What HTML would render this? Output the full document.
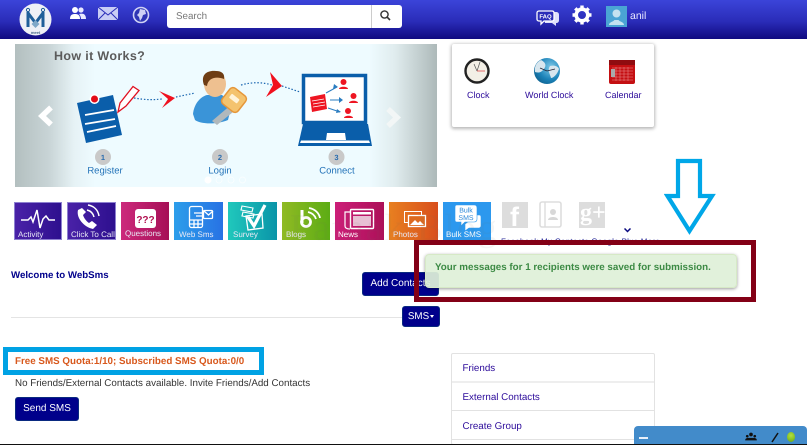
<!DOCTYPE html>
<html><head><meta charset="utf-8"><title>WebSms</title>
<style>
html,body{margin:0;padding:0;background:#fff;width:807px;height:445px;overflow:hidden;font-family:"Liberation Sans",sans-serif;text-rendering:geometricPrecision}
.a{position:absolute}
#root{position:relative;width:807px;height:445px;overflow:hidden}
.t{position:absolute;white-space:nowrap}
.tile{position:absolute;top:202px;height:38px;overflow:hidden}
.tile span{position:absolute;left:4px;bottom:1px;font-size:8px;color:#e8e8f5;white-space:nowrap}
.tile svg{position:absolute;left:0;top:0}
.btn{position:absolute;background:#00008b;border:1px solid #0a2a80;border-radius:3px;color:#fff;font-size:10px;text-align:center;box-sizing:border-box}
.li{position:absolute;left:462.500px;font-size:9.800px;color:#2b0a9a}
</style></head><body><div id="root">

<!-- header -->
<div class="a" style="left:0;top:0;width:807px;height:39px;background:linear-gradient(#3b44d9,#2a2cb8 55%,#100a80)"></div>
<svg class="a" style="left:18px;top:2px" width="36" height="36" viewBox="0 0 36 36">
<circle cx="17.5" cy="17.5" r="16" fill="#eef0f6"/>
<path d="M10 10V25M25 10V25M10 11L17.5 21L25 11" fill="none" stroke="#1f5f9a" stroke-width="3"/>
<circle cx="10" cy="8" r="1.6" fill="none" stroke="#1f5f9a"/><circle cx="25" cy="8" r="1.6" fill="none" stroke="#1f5f9a"/>
<path d="M17.5 18l4 4-4 4-4-4z" fill="#7fa8c8"/>
<text x="17.500" y="32" font-family="Liberation Sans" font-size="4" font-weight="bold" fill="#4a6a8a" text-anchor="middle">meet</text>
</svg>
<svg class="a" style="left:70px;top:6px" width="16" height="14" viewBox="0 0 16 14"><circle cx="5" cy="4" r="3" fill="#fff"/><path d="M0 13c0-4 2-5 5-5s5 1 5 5z" fill="#fff"/><circle cx="11" cy="4" r="2.6" fill="#e8e8ff"/><path d="M9 8c4-1 7 0 7 5h-5c0-2-1-4-2-5z" fill="#e8e8ff"/></svg>
<svg class="a" style="left:98px;top:7px" width="21" height="14" viewBox="0 0 21 14"><rect width="20" height="13" fill="#c9cdf5"/><path d="M0 0L10 8L20 0M0 13L7 6M20 13L13 6" fill="none" stroke="#2a2cb8" stroke-width="1"/></svg>
<svg class="a" style="left:132px;top:6px" width="18" height="18" viewBox="0 0 18 18"><circle cx="9" cy="9" r="7.5" fill="#2f35b5" stroke="#cfd2f5" stroke-width="1.6"/><path d="M8 3l5 1 1 4-3 1-1 3-2 3-1-4-2-2 2-2z" fill="#cfd2f5"/></svg>
<div class="a" style="left:167px;top:5px;width:235px;height:23px;background:#fff;border-radius:3px"></div>
<div class="a" style="left:371px;top:5px;width:1px;height:23px;background:#ccc"></div>
<div class="t" style="left:176px;top:11px;font-size:9.800px;color:#777">Search</div>
<svg class="a" style="left:379px;top:9px" width="13" height="13" viewBox="0 0 13 13"><circle cx="5.5" cy="5.5" r="3.6" fill="none" stroke="#333" stroke-width="1.4"/><path d="M8.2 8.2L11 11" stroke="#333" stroke-width="1.6"/></svg>
<svg class="a" style="left:536px;top:10px" width="24" height="18" viewBox="0 0 24 18"><path d="M7 2h13c2 0 3 1 3 3v5c0 2-1 3-3 3v3l-4-3H9z" fill="#dfe1fb"/><path d="M3 1h13c1.500 0 2 1 2 2v6c0 1-.5 2-2 2H8l-3 3v-3H3c-1.500 0-2-1-2-2V3c0-1 .5-2 2-2z" fill="#2a2cb8" stroke="#fff" stroke-width="1.300"/><text x="9.500" y="8.500" font-size="6" font-weight="bold" fill="#fff" text-anchor="middle" font-family="Liberation Sans">FAQ</text></svg>
<svg class="a" style="left:572px;top:5px" width="20" height="20" viewBox="0 0 20 20"><circle cx="10" cy="10" r="5.800" fill="none" stroke="#fff" stroke-width="3.600"/><g stroke="#fff" stroke-width="3.400"><path d="M10 0.500v3M10 16.500v3M0.500 10h3M16.500 10h3M3.300 3.300l2.100 2.100M14.600 14.600l2.100 2.100M3.300 16.700l2.100-2.100M14.600 5.400l2.100-2.100"/></g></svg>
<svg class="a" style="left:606px;top:6px" width="21" height="21" viewBox="0 0 21 21"><rect width="21" height="21" fill="#4aa4d4"/><circle cx="10.500" cy="7.500" r="4" fill="#c4e2f0"/><path d="M3 19c0-3 4-3 5.500-5h4c1.500 2 5.500 2 5.500 5z" fill="#c4e2f0"/></svg>
<div class="t" style="left:630px;top:10px;font-size:10.500px;color:#e8e8ff">anil</div>

<!-- slider -->
<div class="a" style="left:15px;top:44px;width:422px;height:143px;background:linear-gradient(90deg,#b3bfbf 0,#c8d4d6 8%,#e6f2f5 14%,#eefbff 19%,#eefbff 84%,#e0ecee 90%,#adb9b9 100%)"></div>
<div class="t" style="left:54px;top:49px;font-size:12.500px;font-weight:bold;color:#5b5b5b;letter-spacing:.35px">How it Works?</div>
<svg class="a" style="left:15px;top:44px" width="422" height="143" viewBox="15 44 422 143">
<path d="M51 107.500L42 116L51 124.500" fill="none" stroke="#fff" stroke-width="5.500"/>
<path d="M388 109L397 117.500L388 126" fill="none" stroke="#f2f6f6" stroke-width="5.500"/>
<!-- notepad -->
<path d="M77 103L113 95L122 135L86 143z" fill="#0a5eaa"/>
<circle cx="94.500" cy="99" r="5" fill="#fff"/><circle cx="94.500" cy="99" r="3.500" fill="#e30b17"/>
<path d="M85 115L114 110M85 124L115 119M87 132L116 126" stroke="#fff" stroke-width="1.800"/>
<path d="M118 112L120 103L133 86.500L139 90.500L126 106z" fill="#fff" stroke="#e01020" stroke-width="1.300"/>
<!-- dots & arrows -->
<path d="M134 98C146 100 152 100 162 99" fill="none" stroke="#1a66b0" stroke-width="1.200" stroke-dasharray="1.500 1.800"/>
<path d="M159 91L175 98L162 108L168 99z" fill="#f0101e"/>
<path d="M176 97L195 93" fill="none" stroke="#1a66b0" stroke-width="1.200" stroke-dasharray="1.500 1.800"/>
<path d="M241 85C252 82 262 82 272 85" fill="none" stroke="#1a66b0" stroke-width="1.200" stroke-dasharray="1.500 1.800"/>
<path d="M270 72L282 86L266 97L273 85z" fill="#f0101e"/>
<path d="M282 86L300 92" fill="none" stroke="#1a66b0" stroke-width="1.200" stroke-dasharray="1.500 1.800"/>
<!-- person -->
<path d="M193 114C194 104 200 97 207 95L222 95C228 99 230 105 230 112L228 120C216 125 200 124 195 120z" fill="#3a94d8"/>
<ellipse cx="215" cy="84" rx="11" ry="13" fill="#eec090"/>
<path d="M204 85C200 74 208 70 216 71C222 71 225 74 224 79C216 76 208 78 207 86z" fill="#6e3d14"/>
<path d="M212 121L232 104L238 108L217 125z" fill="#b0b8bc"/>
<rect x="224" y="90" width="20" height="20" rx="4" transform="rotate(38 234 100)" fill="#f4c36e" stroke="#e5963a" stroke-width="1.500"/>
<rect x="229" y="96" width="10" height="5" rx="1" transform="rotate(38 234 99)" fill="#fff3d8"/>
<!-- laptop -->
<rect x="303.500" y="75.500" width="62" height="47" fill="#fff" stroke="#0a5eaa" stroke-width="3.500"/>
<path d="M303 124H368L372 146H298z" fill="#0a5eaa"/>
<path d="M327 133H345L346 140H326z" fill="#fff"/>
<path d="M301 140.500H369L370 143H300z" fill="#fff"/>
<path d="M310 97L325 94L327 109L312 112z" fill="#ee1522"/>
<path d="M312 101l12-2M313 104l12-2M313 107l12-2" stroke="#fff" stroke-width=".8"/>
<path d="M326 93L337 87M330 100H342M328 108L340 112" stroke="#2a7cc0" stroke-width="1"/>
<path d="M334 84l4 3-5 2zM339 97l4 3-4 3zM337 109l4 3-5 1z" fill="#2a7cc0"/>
<g fill="#ee1522"><circle cx="343.500" cy="82" r="3"/><path d="M339 89c0-3 9-3 9 0z"/><circle cx="353.500" cy="96" r="3"/><path d="M349 103c0-3 9-3 9 0z"/><circle cx="348" cy="111" r="3"/><path d="M344 118c0-3 9-3 9 0z"/></g>
<!-- numbers -->
<g fill="#c9c9c9"><circle cx="103" cy="157" r="8"/><circle cx="220" cy="157" r="8"/><circle cx="336.500" cy="157" r="8"/></g>
<g font-family="Liberation Sans" font-size="7.500" font-weight="bold" fill="#2a6cae" text-anchor="middle"><text x="103" y="160">1</text><text x="220" y="160">2</text><text x="336.500" y="160">3</text></g>
<g font-family="Liberation Sans" font-size="9.500" fill="#2272b8" text-anchor="middle"><text x="105" y="173.500">Register</text><text x="220" y="173.500">Login</text><text x="337" y="173.500">Connect</text></g>
<circle cx="208" cy="180" r="3.500" fill="#fff"/><g fill="none" stroke="#fff" stroke-width=".7" opacity=".8"><circle cx="219" cy="180" r="3"/><circle cx="231" cy="180" r="3"/><circle cx="242.500" cy="180" r="3"/></g>
</svg>

<!-- clock panel -->
<div class="a" style="left:452px;top:44px;width:202px;height:83px;background:#fff;border-radius:2px;box-shadow:0 1px 3px 1px rgba(0,0,0,.28)"></div>
<svg class="a" style="left:463px;top:57px" width="100" height="28" viewBox="463 57 100 28">
<defs><radialGradient id="gb" cx=".65" cy=".35" r=".8"><stop offset="0" stop-color="#7cc8e8"/><stop offset=".6" stop-color="#1b82b8"/><stop offset="1" stop-color="#0d5c88"/></radialGradient></defs>
<circle cx="477" cy="71" r="11.500" fill="#f3efe6" stroke="#222" stroke-width="2.400"/><path d="M477 71L474 64M477 71L480 62" stroke="#555" stroke-width=".7"/><path d="M477 71h8" stroke="#d33" stroke-width=".7"/>
<circle cx="547" cy="71" r="13" fill="url(#gb)"/><path d="M541 60c4 2 6 5 3 9s-6 4-9 3c-1-6 2-10 6-12zM550 66c4-1 8 0 9 3-2 6-6 9-8 9-1-4-4-8-1-12z" fill="#d8e6ee"/><path d="M547 71l-7-3M547 71l8-2" stroke="#223" stroke-width=".8"/>
</svg>
<svg class="a" style="left:609px;top:60px" width="26" height="24" viewBox="0 0 26 24"><rect width="26" height="24" rx="2" fill="#c40f12"/><rect width="26" height="5" fill="#8f0c10"/><g stroke="#ea8d8d" stroke-width=".5"><path d="M3 8h21M3 11h21M3 14h21M3 17h21M3 20h21M7 7v14M11 7v14M15 7v14M19 7v14"/></g><rect x="2" y="9" width="4" height="8" fill="#aaa"/></svg>
<div class="t" style="left:467px;top:90px;font-size:9px;color:#2b0a9a">Clock</div>
<div class="t" style="left:525px;top:90px;font-size:9px;color:#2b0a9a">World Clock</div>
<div class="t" style="left:605px;top:90px;font-size:9px;color:#2b0a9a">Calendar</div>

<!-- tiles -->
<div class="tile" style="left:14px;width:48px;background:linear-gradient(90deg,#4a22a8,#2d0f8e);outline:1px solid #8d80d0;outline-offset:-1px"><svg width="48" height="38"><path d="M7 18H14L17 15L19 20L23 8L26 26L29 17L32 14L35 18H41" fill="none" stroke="#fff" stroke-width="1.500"/></svg><span style="left:4px">Activity</span></div>
<div class="tile" style="left:67px;width:49px;background:linear-gradient(90deg,#4a22a8,#2d0f8e);outline:1px solid #8d80d0;outline-offset:-1px"><svg width="49" height="38"><path d="M11 8C9 16 17 25 26 27L30 23L25 19L22 21C19 19 17 16 16 13L19 10L15 6z" fill="#fff"/><path d="M20 8C24 9 26 11 27 15M21 3C27 4 31 8 32 14" fill="none" stroke="#fff" stroke-width="1.500"/></svg><span>Click To Call</span></div>
<div class="tile" style="left:121px;width:48px;background:linear-gradient(90deg,#cc2a7c,#a60f56)"><svg width="48" height="38"><rect x="14" y="7" width="21" height="19" rx="3" fill="#fff"/><text x="24.500" y="21" font-family="Liberation Sans" font-size="10" font-weight="bold" fill="#b01050" text-anchor="middle">???</text></svg><span style="bottom:2px;left:4px">Questions</span></div>
<div class="tile" style="left:174px;width:49px;background:linear-gradient(90deg,#2c9eea,#2872e4)"><svg width="49" height="38" fill="none" stroke="#fff" stroke-width="1.300"><rect x="15.500" y="4.500" width="13" height="21" rx="2"/><path d="M16 18h12M16 22h12M20 18v7M24 18v7"/><rect x="29.500" y="8.500" width="9" height="8" rx="1" fill="#2b82e6"/><path d="M30 9l4.500 4 4.500-4M20 11h9M22 14h7"/></svg><span style="left:5px">Web Sms</span></div>
<div class="tile" style="left:228px;width:49px;background:linear-gradient(90deg,#20c8bc,#0a94a8)"><svg width="49" height="38" fill="none" stroke="#fff"><path d="M14 4L25 6L24 10L13 8zM15 10L26 12L25 16L14 14z" stroke-width="1.100"/><path d="M18 14L34 12L35 26L20 28z" stroke-width="1.300"/><path d="M20 15L26 24L37 3" stroke-width="3.200"/></svg><span style="left:5px">Survey</span></div>
<div class="tile" style="left:282px;width:48px;background:linear-gradient(90deg,#90ba24,#5cac14)"><svg width="48" height="38" fill="none" stroke="#fff"><path d="M20 8V21" stroke-width="3"/><circle cx="24" cy="20" r="4.500" stroke-width="2.800"/><path d="M26 10C31 11 33 14 34 17M27 6C33 7 37 11 38 16" stroke-width="1.800"/></svg><span>Blogs</span></div>
<div class="tile" style="left:335px;width:49px;background:linear-gradient(90deg,#cc1e78,#ac1058)"><svg width="49" height="38" fill="none" stroke="#fff"><rect x="15.500" y="7.500" width="23" height="19" rx="1" stroke-width="1.400"/><path d="M15 10h-5v14c0 2 2 3 5 3" stroke-width="1.200"/><rect x="18" y="10" width="18" height="2.500" fill="#fff" stroke="none"/><rect x="18" y="14" width="18" height="10" fill="#e8c0d4" stroke="none"/></svg><span style="left:3px;color:#fff">News</span></div>
<div class="tile" style="left:389px;width:49px;background:linear-gradient(90deg,#e88020,#d84e1c)"><svg width="49" height="38" fill="none" stroke="#fff"><rect x="15.500" y="9.500" width="17" height="11" stroke-width="1"/><rect x="19.500" y="13.500" width="17" height="11" fill="#dd6a20" stroke-width="1.300"/><path d="M21 23l5-5 3 3 2-2 4 4z" fill="#fff" stroke="none"/></svg><span>Photos</span></div>
<div class="tile" style="left:443px;width:48px;background:#2c98ee"><svg width="48" height="38"><path d="M34 13H36C38 13 38 14 38 16V24C38 25 37 26 36 26H26L22 29V22z" fill="#fff" stroke="#2c98ee" stroke-width=".6"/><path d="M14 3H31C33 3 34 4 34 6V17C34 19 33 20 31 20H22L18 24V20H14C12 20 12 19 12 17V6C12 4 12 3 14 3z" fill="#fff" stroke="#2c98ee" stroke-width=".6"/><text x="23" y="10.500" font-family="Liberation Sans" font-size="7" fill="#2c88d8" text-anchor="middle">Bulk</text><text x="23" y="18" font-family="Liberation Sans" font-size="7" fill="#2c88d8" text-anchor="middle">SMS</text></svg><span style="left:3px;color:#fff">Bulk SMS</span></div>

<!-- social -->
<div class="a" style="left:502px;top:202px;width:26px;height:26px;background:#ddd"></div>
<div class="t" style="left:510px;top:202px;font-size:27px;font-weight:bold;color:#fff">f</div>
<svg class="a" style="left:539px;top:201px" width="24" height="27" viewBox="0 0 24 27"><rect x="1" y="1" width="21" height="25" rx="2" fill="#fff" stroke="#ddd" stroke-width="1.600"/><path d="M6 1v25" stroke="#ddd" stroke-width="1.400"/><circle cx="14" cy="11" r="3" fill="#d8d8d8"/><path d="M9 19c0-4 10-4 10 0z" fill="#d8d8d8"/></svg>
<div class="a" style="left:579px;top:202px;width:26px;height:26px;background:#ddd"></div>
<div class="t" style="left:580px;top:200px;font-size:24px;font-weight:bold;color:#fff;font-family:'Liberation Serif',serif">g+</div>
<svg class="a" style="left:624px;top:228px" width="7" height="5" viewBox="0 0 7 5"><path d="M.5.500L3.500 3.500L6.500.500" fill="none" stroke="#0a0a80" stroke-width="1.500"/></svg>
<div class="t" style="left:501px;top:237px;font-size:8px;color:#2a2a9a;letter-spacing:.3px">Facebook My Contacts Google Plus More</div>

<!-- watermark -->
<div class="t" style="left:290px;top:206px;font-size:38px;color:rgba(120,120,100,.07);font-family:'Liberation Serif',serif;letter-spacing:2px">Pathak Blog</div>

<!-- Welcome -->
<div class="t" style="left:11px;top:270px;font-size:9.700px;font-weight:bold;color:#00008b">Welcome to WebSms</div>
<div class="btn" style="left:362px;top:272px;width:77px;height:24px;line-height:22px">Add Contacts</div>
<div class="a" style="left:11px;top:317px;width:391px;height:1px;background:#e4e4e4"></div>
<div class="btn" style="left:402px;top:306px;width:38px;height:21px;line-height:19px;font-size:9.800px">SMS<span style="display:inline-block;border:2.500px solid transparent;border-top:3px solid #fff;border-bottom:0;vertical-align:middle;margin-left:1px"></span></div>

<!-- alert -->
<div class="a" style="left:425px;top:254px;width:312px;height:34px;background:rgba(223,240,216,.93);border:1px solid #d6e9c6;box-sizing:border-box;border-radius:4px;box-shadow:0 1px 3px rgba(0,0,0,.4)"></div>
<div class="t" style="left:435px;top:262px;font-size:9.800px;font-weight:bold;color:#3c8a44">Your messages for 1 recipients were saved for submission.</div>
<div class="a" style="left:414px;top:240px;width:342px;height:62px;border:5px solid #830016;box-sizing:border-box"></div>

<!-- down arrow -->
<svg class="a" style="left:664px;top:158px" width="54" height="80" viewBox="0 0 54 80"><path d="M14 3H36V38H48L25.500 73L3.500 38H14z" fill="none" stroke="#00a7e8" stroke-width="4.200"/></svg>

<!-- quota -->
<div class="a" style="left:3px;top:347px;width:261px;height:28px;border:5px solid #00a2e4;box-sizing:border-box"></div>
<div class="t" style="left:15px;top:356px;font-size:9.800px;font-weight:bold;color:#d8581c">Free SMS Quota:1/10; Subscribed SMS Quota:0/0</div>
<div class="t" style="left:15px;top:378px;font-size:9.800px;color:#333">No Friends/External Contacts available. Invite Friends/Add Contacts</div>
<div class="btn" style="left:15px;top:397px;width:64px;height:24px;line-height:22px">Send SMS</div>

<!-- list -->
<div class="a" style="left:451px;top:353px;width:204px;height:92px;border:1px solid #e2e2e2;border-radius:2px;box-sizing:border-box"></div>
<div class="a" style="left:452px;top:381px;width:202px;height:2px;background:#eee"></div>
<div class="a" style="left:452px;top:410px;width:202px;height:1px;background:#e2e2e2"></div>
<div class="a" style="left:452px;top:439px;width:202px;height:1px;background:#e2e2e2"></div>
<div class="li" style="top:363px">Friends</div>
<div class="li" style="top:392px">External Contacts</div>
<div class="li" style="top:421px">Create Group</div>

<!-- chat bar -->
<div class="a" style="left:634px;top:426px;width:173px;height:19px;background:#428bca;border-radius:4px 4px 0 0"></div>
<div class="a" style="left:639px;top:437px;width:9px;height:1.500px;background:#e8f0fa"></div>
<svg class="a" style="left:745px;top:432px" width="12" height="10" viewBox="0 0 14 12"><circle cx="7" cy="3" r="2.200" fill="#111"/><circle cx="2.500" cy="5" r="1.600" fill="#111"/><circle cx="11.500" cy="5" r="1.600" fill="#111"/><path d="M0 10c0-3 3-3 4-3h6c1 0 4 0 4 3z" fill="#111"/></svg>
<svg class="a" style="left:770px;top:432px" width="10" height="12" viewBox="0 0 10 12"><path d="M8 1L2 10" stroke="#111" stroke-width="1.500"/></svg>
<div class="a" style="left:787px;top:432px;width:8px;height:10px;border-radius:50%;background:radial-gradient(circle at 50% 35%,#b4e040,#64a810)"></div>

<!-- bottom line -->
<div class="a" style="left:0;top:443.500px;width:807px;height:1.500px;background:#111"></div>
</div></body></html>
